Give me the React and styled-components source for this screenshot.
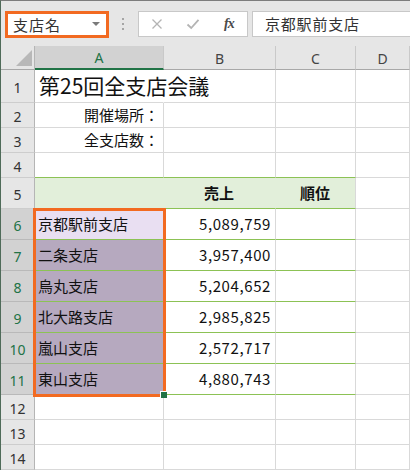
import React from "react";
import styled, { createGlobalStyle } from "styled-components";

const GlobalStyle = createGlobalStyle`
  body {
    margin: 0;
    background: #ffffff;
    font-family: "Noto Sans CJK JP", "Noto Sans", sans-serif;
  }
`;

const JP = `"Noto Sans CJK JP", "Noto Sans", sans-serif`;
const UI = `"Noto Sans", "Noto Sans CJK JP", sans-serif`;
const ORANGE = "#f26a21";
const XL_GREEN = "#217346";
const BAND_LINE = "#8cc255";

const Window = styled.div`
  width: 410px;
  height: 470px;
  overflow: hidden;
  box-sizing: border-box;
  background: #e6e6e6;
  border-top: 1px solid #7d7d7d;
  border-left: 1px solid #4f6b59;
  display: flex;
  flex-direction: column;
`;

const FormulaBar = styled.div`
  height: 45px;
  flex: none;
  display: flex;
  align-items: center;
  padding: 0 0 0 4px;
  box-sizing: border-box;
`;

const NameBox = styled.div`
  width: 104px;
  height: 27px;
  box-sizing: border-box;
  border: 3px solid ${ORANGE};
  background: #fff;
  display: flex;
  align-items: center;
  justify-content: space-between;
  padding: 0 6px 0 5px;
  font-family: ${JP};
  font-size: 15px;
  letter-spacing: 1px;
  color: #333;
  margin-top: 1px;
`;

const Caret = styled.span`
  width: 0;
  height: 0;
  border-left: 4px solid transparent;
  border-right: 4px solid transparent;
  border-top: 4px solid #7a7a7a;
`;

const Grip = styled.div`
  width: 2px;
  margin: 0 14px 0 13px;
  display: flex;
  flex-direction: column;
  gap: 3px;
  & span {
    width: 2px;
    height: 2px;
    background: #a5a5a5;
  }
`;

const FuncBox = styled.div`
  width: 110px;
  height: 26px;
  box-sizing: border-box;
  border: 1px solid #c8c8c8;
  background: #fff;
  display: flex;
  align-items: center;
  padding: 0 0 0 12px;
  margin-right: 4px;
  & > svg + svg {
    margin-left: 23px;
  }
`;

const Fx = styled.span`
  margin-left: 24px;
  font-family: "Liberation Serif", serif;
  font-style: italic;
  font-weight: 700;
  font-size: 14px;
  color: #4a4a4a;
  letter-spacing: -1px;
`;

const FormulaInput = styled.div`
  flex: 1;
  height: 26px;
  box-sizing: border-box;
  border: 1px solid #c8c8c8;
  border-right: none;
  background: #fff;
  display: flex;
  align-items: center;
  padding-left: 12px;
  font-family: ${JP};
  font-size: 15px;
  letter-spacing: 0.8px;
  color: #333;
`;

const Sheet = styled.div`
  position: relative;
  flex: 1;
  background: #fff;
  display: grid;
  grid-template-columns: 34px 129px 112px 80px 1fr;
  grid-template-rows: 24px 33px 25px 25px 25px 31px repeat(6, 31px) 25px 25px 25px 1fr;
`;

const ColHead = styled.div`
  box-sizing: border-box;
  display: flex;
  align-items: center;
  justify-content: center;
  background: ${(p) => (p.$active ? "#d2d2d2" : "#e6e6e6")};
  border-right: 1px solid #c9c9c9;
  border-bottom: ${(p) => (p.$active ? `2px solid ${XL_GREEN}` : "1px solid #a8a8a8")};
  color: ${(p) => (p.$active ? XL_GREEN : "#444")};
  font-family: ${UI};
  font-size: 14px;
  padding-top: 1px;
`;

const Corner = styled.div`
  position: relative;
  background: #e6e6e6;
  border-right: 1px solid #b5b5b5;
  border-bottom: 1px solid #a8a8a8;
  box-sizing: border-box;
  &::after {
    content: "";
    position: absolute;
    right: 2px;
    bottom: 3px;
    width: 16px;
    height: 16px;
    background: #b8b8b8;
    clip-path: polygon(100% 0, 100% 100%, 0 100%);
  }
`;

const RowHead = styled.div`
  box-sizing: border-box;
  display: flex;
  align-items: center;
  justify-content: center;
  background: ${(p) => (p.$active ? "#d2d2d2" : "#e6e6e6")};
  border-right: 1px solid #b5b5b5;
  border-bottom: 1px solid ${(p) => (p.$active ? "#b9b9b9" : "#cdcdcd")};
  color: ${(p) => (p.$active ? XL_GREEN : "#333")};
  font-family: ${UI};
  font-size: 14px;
  padding-top: 2px;
`;

const justify = { left: "flex-start", right: "flex-end", center: "center" };

const Cell = styled.div`
  box-sizing: border-box;
  min-width: 0;
  display: flex;
  align-items: center;
  justify-content: ${(p) => justify[p.$align || "left"]};
  padding: ${(p) => (p.$title ? "0 0 3px 4px" : "0 4px 1px 3px")};
  background: ${(p) => p.$fill || "transparent"};
  border-right: 1px solid ${(p) => p.$vline || "#d9d9d9"};
  border-bottom: 1px solid ${(p) => p.$hline || "#d9d9d9"};
  font-family: ${JP};
  font-size: ${(p) => (p.$title ? "21px" : "15px")};
  font-weight: ${(p) => (p.$bold ? 700 : 400)};
  letter-spacing: ${(p) => (p.$num ? "0.6px" : "0")};
  color: #111;
  white-space: nowrap;
  overflow: visible;
`;

const Selection = styled.div`
  position: absolute;
  left: 32px;
  top: 162px;
  width: 133px;
  height: 189px;
  box-sizing: border-box;
  border: 3px solid ${ORANGE};
  pointer-events: none;
`;

const FillHandle = styled.div`
  position: absolute;
  left: 160px;
  top: 346px;
  width: 6px;
  height: 6px;
  background: ${XL_GREEN};
  box-shadow: -1px -1px 0 #ffffff;
`;

const CrossIcon = () => (
  <svg width="12" height="12" viewBox="0 0 12 12">
    <path d="M1.5 1.5 L10.5 10.5 M10.5 1.5 L1.5 10.5" stroke="#b4b4b4" strokeWidth="1.3" fill="none" />
  </svg>
);

const CheckIcon = () => (
  <svg width="14" height="12" viewBox="0 0 14 12">
    <path d="M1.5 6.5 L5.2 10 L12.5 1.8" stroke="#b4b4b4" strokeWidth="1.8" fill="none" />
  </svg>
);

const columns = ["A", "B", "C", "D"];

const LAV_LIGHT = "#e9dff2";
const LAV_DARK = "#b6a9bf";
const BAND = "#e2efda";

const branches = [
  ["京都駅前支店", "5,089,759", LAV_LIGHT],
  ["二条支店", "3,957,400", LAV_DARK],
  ["烏丸支店", "5,204,652", LAV_DARK],
  ["北大路支店", "2,985,825", LAV_DARK],
  ["嵐山支店", "2,572,717", LAV_DARK],
  ["東山支店", "4,880,743", LAV_DARK],
];

const rows = [
  { n: 1, cells: [{ text: "第25回全支店会議", title: true, vline: "transparent" }, {}, {}, {}] },
  { n: 2, cells: [{ text: "開催場所：", align: "right" }, {}, {}, {}] },
  { n: 3, cells: [{ text: "全支店数：", align: "right" }, {}, {}, {}] },
  { n: 4, cells: [{ hline: BAND_LINE }, { hline: BAND_LINE }, { hline: BAND_LINE }, {}] },
  {
    n: 5,
    cells: [
      { fill: BAND, vline: BAND, hline: BAND_LINE },
      { text: "売上", bold: true, align: "center", fill: BAND, vline: BAND, hline: BAND_LINE },
      { text: "順位", bold: true, align: "center", fill: BAND, hline: BAND_LINE },
      {},
    ],
  },
  ...branches.map(([name, sales, fill], i) => ({
    n: 6 + i,
    active: true,
    cells: [
      { text: name, fill, hline: BAND_LINE },
      { text: sales, align: "right", num: true, hline: BAND_LINE },
      { hline: BAND_LINE },
      {},
    ],
  })),
  { n: 12, cells: [{}, {}, {}, {}] },
  { n: 13, cells: [{}, {}, {}, {}] },
  { n: 14, cells: [{}, {}, {}, {}] },
];

const App = () => {
  return (
    <>
      <GlobalStyle />
      <Window>
        <FormulaBar>
          <NameBox>
            <span>支店名</span>
            <Caret />
          </NameBox>
          <Grip>
            <span />
            <span />
            <span />
          </Grip>
          <FuncBox>
            <CrossIcon />
            <CheckIcon />
            <Fx>fx</Fx>
          </FuncBox>
          <FormulaInput>京都駅前支店</FormulaInput>
        </FormulaBar>
        <Sheet>
          <Corner />
          {columns.map((c) => (
            <ColHead key={c} $active={c === "A"}>
              {c}
            </ColHead>
          ))}
          {rows.map((row) => (
            <React.Fragment key={row.n}>
              <RowHead $active={row.active}>{row.n}</RowHead>
              {row.cells.map((cell, ci) => (
                <Cell
                  key={ci}
                  $align={cell.align}
                  $fill={cell.fill}
                  $vline={cell.vline}
                  $hline={cell.hline}
                  $bold={cell.bold}
                  $title={cell.title}
                  $num={cell.num}
                >
                  {cell.text}
                </Cell>
              ))}
            </React.Fragment>
          ))}
          <Selection />
          <FillHandle />
        </Sheet>
      </Window>
    </>
  );
};

export default App;
